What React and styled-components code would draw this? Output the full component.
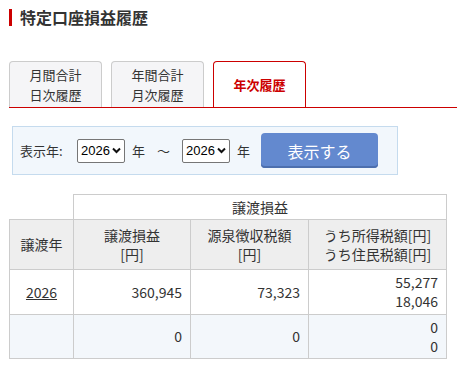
import React from 'react';
import styled, { createGlobalStyle } from 'styled-components';

const GlobalStyle = createGlobalStyle`
  body {
    margin: 0;
    background: #fff;
    color: #333;
    font-family: "Noto Sans CJK JP", "Noto Sans", sans-serif;
  }
`;

const Page = styled.div`
  padding: 9px 0 0 9px;
`;

const Title = styled.h1`
  margin: 0;
  border-left: 3px solid #c00;
  padding-left: 8px;
  height: 17px;
  line-height: 17px;
  font-size: 16px;
  font-weight: 700;
  color: #333;
`;

const Tabs = styled.div`
  display: flex;
  gap: 9px;
  margin-top: 35px;
  border-bottom: 1px solid #c00;
`;

const Tab = styled.div`
  box-sizing: border-box;
  width: 93px;
  height: 46px;
  display: flex;
  flex-direction: column;
  align-items: center;
  justify-content: center;
  border: 1px solid ${p => (p.$active ? '#c00' : '#ccc')};
  border-bottom: none;
  border-radius: 4px 4px 0 0;
  background: ${p => (p.$active ? '#fff' : '#f5f5f7')};
  color: ${p => (p.$active ? '#c00' : '#333')};
  font-size: 13px;
  font-weight: ${p => (p.$active ? 700 : 400)};
  line-height: 20px;
`;

const SearchBox = styled.div`
  box-sizing: border-box;
  width: 386px;
  height: 49px;
  margin: 18px 0 0 3px;
  padding-left: 7px;
  display: flex;
  align-items: center;
  border: 1px solid #c5dbee;
  background: #f2f7fc;
  font-size: 13px;
`;

const Label = styled.span`
  width: 57px;
  flex: none;
`;

const Unit = styled.span`
  margin: 0 ${p => p.$after}px 0 7px;
`;

const Tilde = styled.span`
  margin-right: 12px;
`;

const SelectWrap = styled.span`
  position: relative;
  display: inline-flex;
  width: 48px;
  height: 24px;
`;

const YearSelect = styled.select`
  appearance: none;
  box-sizing: border-box;
  width: 48px;
  height: 24px;
  padding: 0 0 0 3px;
  border: 1px solid #767676;
  border-radius: 2px;
  background: #fff;
  font-family: "Liberation Sans", Arial, sans-serif;
  font-size: 13px;
  color: #000;
`;

const Chevron = styled.svg`
  position: absolute;
  right: 4px;
  top: 8px;
  pointer-events: none;
`;

const ShowButton = styled.button`
  box-sizing: border-box;
  width: 117px;
  height: 35px;
  border: none;
  border-radius: 4px;
  background: #6389cf;
  box-shadow: inset 0 -2px 0 #4d6fae;
  color: #fff;
  font-family: "Noto Sans CJK JP", sans-serif;
  font-size: 16px;
  padding: 0;
`;

const Table = styled.table`
  margin-top: 19px;
  width: 437px;
  border-collapse: collapse;
  table-layout: fixed;
  font-size: 14px;
  color: #333;
`;

const Cell = styled.td`
  border: 1px solid #ccc;
  padding: 0 8px;
  height: ${p => p.$h}px;
  line-height: 19px;
  text-align: ${p => p.$align || 'center'};
  background: ${p => p.$bg || '#fff'};
  vertical-align: middle;
`;

const Blank = styled.td`
  border: none;
  border-bottom: 1px solid #ccc;
`;

const YearLink = styled.a`
  color: #333;
  text-decoration: underline;
`;

const years = ['2026'];

function YearPicker() {
  return (
    <SelectWrap>
      <YearSelect defaultValue="2026">
        {years.map(y => <option key={y}>{y}</option>)}
      </YearSelect>
      <Chevron width="9" height="7" viewBox="0 0 9 7">
        <path d="M1 1.5 L4.5 5 L8 1.5" fill="none" stroke="#111" strokeWidth="2" />
      </Chevron>
    </SelectWrap>
  );
}

export default function App() {
  return (
    <Page>
      <GlobalStyle />
      <Title>特定口座損益履歴</Title>
      <Tabs>
        <Tab>
          <span>月間合計</span>
          <span>日次履歴</span>
        </Tab>
        <Tab>
          <span>年間合計</span>
          <span>月次履歴</span>
        </Tab>
        <Tab $active>年次履歴</Tab>
      </Tabs>

      <SearchBox>
        <Label>表示年:</Label>
        <YearPicker />
        <Unit $after={12}>年</Unit>
        <Tilde>～</Tilde>
        <YearPicker />
        <Unit $after={11}>年</Unit>
        <ShowButton>表示する</ShowButton>
      </SearchBox>

      <Table>
        <colgroup>
          <col style={{ width: 64 }} />
          <col style={{ width: 117 }} />
          <col style={{ width: 118 }} />
          <col style={{ width: 138 }} />
        </colgroup>
        <tbody>
          <tr>
            <Blank />
            <Cell colSpan={3} $h={24}>譲渡損益</Cell>
          </tr>
          <tr>
            <Cell $h={49} $bg="#eee">譲渡年</Cell>
            <Cell $bg="#eee">譲渡損益<br />[円]</Cell>
            <Cell $bg="#eee">源泉徴収税額<br />[円]</Cell>
            <Cell $bg="#eee">うち所得税額[円]<br />うち住民税額[円]</Cell>
          </tr>
          <tr>
            <Cell $h={44}><YearLink href="#">2026</YearLink></Cell>
            <Cell $align="right">360,945</Cell>
            <Cell $align="right">73,323</Cell>
            <Cell $align="right">55,277<br />18,046</Cell>
          </tr>
          <tr>
            <Cell $h={43} $bg="#f3f7fb"></Cell>
            <Cell $align="right" $bg="#f3f7fb">0</Cell>
            <Cell $align="right" $bg="#f3f7fb">0</Cell>
            <Cell $align="right" $bg="#f3f7fb">0<br />0</Cell>
          </tr>
        </tbody>
      </Table>
    </Page>
  );
}
